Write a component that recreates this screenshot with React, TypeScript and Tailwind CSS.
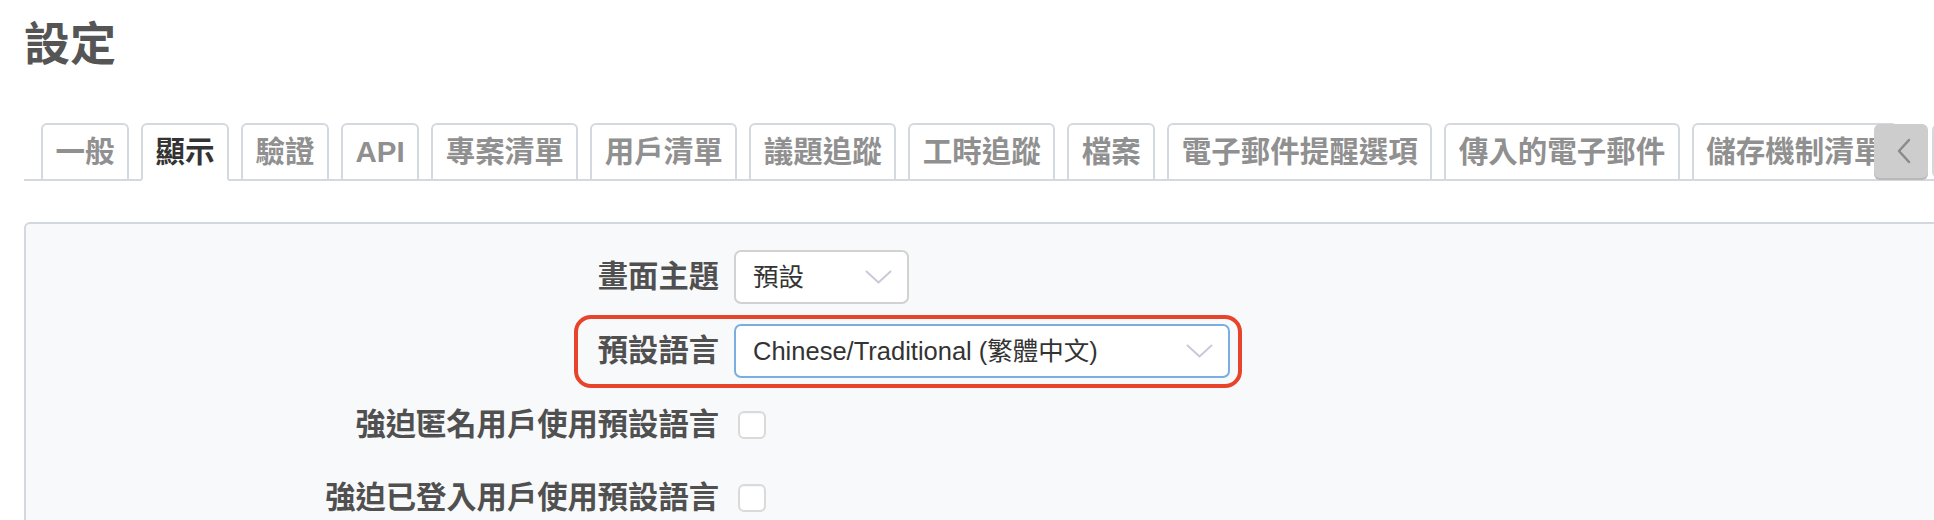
import React from 'react';

const tabs = [
  '一般',
  '顯示',
  '驗證',
  'API',
  '專案清單',
  '用戶清單',
  '議題追蹤',
  '工時追蹤',
  '檔案',
  '電子郵件提醒選項',
  '傳入的電子郵件',
  '儲存機制清單',
];

const Chevron: React.FC = () => (
  <svg width="27" height="14" viewBox="0 0 27 14" fill="none">
    <path d="M1.5 1.5 L13.5 12.5 L25.5 1.5" stroke="#c9cad8" strokeWidth="2" strokeLinecap="round" strokeLinejoin="round" />
  </svg>
);

const Select: React.FC<{ value: string; width: string; focused?: boolean }> = ({ value, width, focused }) => (
  <div
    className={`${width} h-[54px] flex items-center justify-between pl-[17px] pr-[15px] bg-white rounded-[7px] border-2 ${
      focused ? 'border-[#7aaee0]' : 'border-[#d2d2d2]'
    }`}
  >
    <span className="text-[25.5px] text-[#333] whitespace-nowrap">{value}</span>
    <Chevron />
  </div>
);

const Checkbox: React.FC = () => (
  <div className="ml-[4px] w-[28px] h-[28px] rounded-[6px] bg-white border-2 border-[#dadada] shadow-[inset_0_1px_1px_rgba(0,0,0,0.04)]" />
);

const Label: React.FC<{ children: React.ReactNode }> = ({ children }) => (
  <div className="h-[54px] flex items-center justify-end text-[30.3px] font-bold text-[#505050] whitespace-nowrap">
    {children}
  </div>
);

export default function App() {
  return (
    <div className="w-[1934px] h-[520px] overflow-hidden bg-white pl-[24px] font-['Liberation_Sans','Noto_Sans_CJK_TC',sans-serif]">
      <h1 className="pt-[18px] text-[46px] leading-[52px] font-bold text-[#555]">設定</h1>

      {/* tabs */}
      <div className="relative mt-[53px] h-[58px] border-b-2 border-[#d4d9df]">
        <div className="flex items-end gap-[12px] pl-[17px] h-full">
          {tabs.map((t, i) => (
            <div
              key={t}
              className={`shrink-0 h-[56px] flex items-center px-[12.5px] border-2 rounded-t-[6px] text-[29.5px] font-bold whitespace-nowrap ${
                i === 1
                  ? 'border-[#d4d9df] border-b-white bg-white text-[#333] h-[58px] -mb-[2px]'
                  : 'border-[#d4d9df] border-b-0 bg-white text-[#909090]'
              }`}
            >
              {t}
            </div>
          ))}
        </div>
        <div className="absolute right-[6px] top-[1px] w-[54px] h-[54px] rounded-[6px] bg-[#cdcdcd] shadow-[0_2px_0_#b9b9b9] flex items-center justify-center">
          <svg width="16" height="26" viewBox="0 0 16 26" fill="none" className="ml-[6px]">
            <path d="M13 2 L3 13 L13 24" stroke="#8a8a8a" strokeWidth="2.5" strokeLinecap="round" strokeLinejoin="round" />
          </svg>
        </div>
        <div className="absolute right-[-52px] top-[1px] w-[54px] h-[54px] rounded-[6px] bg-white border-2 border-[#d4d9df]" />
      </div>

      {/* panel */}
      <div className="mt-[41px] w-[1950px] h-[340px] rounded-[6px] border-2 border-[#d3d8de] bg-[#f8f9fa]">
        <div className="grid grid-cols-[693px_1fr] gap-x-[15px] gap-y-[20px] pt-[26px]">
          <Label>畫面主題</Label>
          <div className="flex items-center">
            <Select value="預設" width="w-[175px]" />
          </div>

          <Label>預設語言</Label>
          <div className="flex items-center">
            <div className="relative">
              <Select value="Chinese/Traditional (繁體中文)" width="w-[496px]" focused />
              <div className="absolute left-[-160px] right-[-12px] top-[-9px] bottom-[-10px] border-[4px] border-[#e8432b] rounded-[17px] pointer-events-none" />
            </div>
          </div>

          <Label>強迫匿名用戶使用預設語言</Label>
          <div className="flex items-center">
            <Checkbox />
          </div>

          <div className="-mt-[1px]">
            <Label>強迫已登入用戶使用預設語言</Label>
          </div>
          <div className="flex items-center -mt-[1px]">
            <Checkbox />
          </div>
        </div>
      </div>
    </div>
  );
}
